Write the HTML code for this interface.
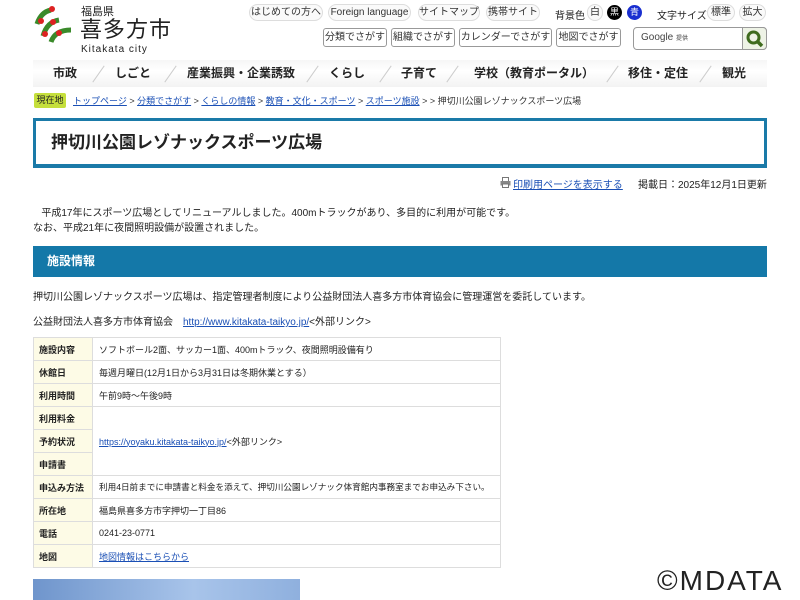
<!DOCTYPE html>
<html><head><meta charset="utf-8"><style>
*{box-sizing:border-box;margin:0;padding:0}
body{width:800px;height:600px;overflow:hidden;background:#fff;font-family:"Liberation Sans","Noto Sans CJK JP",sans-serif;color:#222;font-size:10px;position:relative}
.a{position:absolute}
.pill{position:absolute;top:4px;height:17px;border:1px solid #ddd;border-radius:9px;font-size:10px;line-height:15px;text-align:center;background:#fafafa;color:#333;white-space:nowrap}
.btn{position:absolute;top:28px;height:19px;border:1px solid #999;border-radius:3px;font-size:10px;line-height:17px;text-align:center;background:#fff;color:#333;white-space:nowrap}
.nav{position:absolute;top:60px;height:27px;font-size:12px;font-weight:bold;line-height:27px;color:#222}
.sl{position:absolute;top:64px;width:1px;height:20px;background:#ccc;transform:rotate(35deg)}
a{color:#1a4fb5;text-decoration:underline}
table{position:absolute;left:33px;top:337px;width:468px;border-collapse:collapse;font-size:9px}
td{border:1px solid #ddd;height:23px;padding:0 6px;white-space:nowrap}
td.h{background:#fdfbe6;font-weight:bold;width:59px;padding:0 5px}
</style></head><body>
<svg class="a" style="left:33px;top:4px" width="42" height="40" viewBox="0 0 42 40">
<path d="M4 20 Q8 8 18 6 M10 32 Q14 18 26 16 M18 38 Q22 26 38 26" stroke="#3a8a2a" stroke-width="5" fill="none"/>
<circle cx="19" cy="5" r="3" fill="#d22"/><circle cx="8" cy="17" r="3" fill="#d22"/><circle cx="20" cy="18" r="3" fill="#d22"/><circle cx="12" cy="30" r="3" fill="#d22"/><circle cx="26" cy="29" r="3" fill="#d22"/>
</svg>
<div class="a" style="left:81px;top:3px;font-size:11px">福島県</div>
<div class="a" style="left:80px;top:12px;font-size:22px;letter-spacing:1px">喜多方市</div>
<div class="a" style="left:81px;top:44px;font-size:10px;letter-spacing:1px">Kitakata city</div>
<div class="pill" style="left:249px;width:74px">はじめての方へ</div>
<div class="pill" style="left:328px;width:83px">Foreign language</div>
<div class="pill" style="left:418px;width:62px">サイトマップ</div>
<div class="pill" style="left:486px;width:54px">携帯サイト</div>
<div class="a" style="left:555px;top:7px;font-size:10px">背景色</div>
<div class="pill" style="left:587px;width:16px">白</div>
<div class="a" style="left:607px;top:5px;width:15px;height:15px;border-radius:50%;background:#000;color:#fff;font-size:9px;text-align:center;line-height:15px">黒</div>
<div class="a" style="left:627px;top:5px;width:15px;height:15px;border-radius:50%;background:#1a2fd0;color:#fff;font-size:9px;text-align:center;line-height:15px">青</div>
<div class="a" style="left:657px;top:7px;font-size:10px">文字サイズ</div>
<div class="pill" style="left:707px;width:28px">標準</div>
<div class="pill" style="left:739px;width:27px">拡大</div>
<div class="btn" style="left:323px;width:64px">分類でさがす</div>
<div class="btn" style="left:391px;width:64px">組織でさがす</div>
<div class="btn" style="left:459px;width:93px">カレンダーでさがす</div>
<div class="btn" style="left:556px;width:65px">地図でさがす</div>
<div class="a" style="left:633px;top:27px;width:134px;height:23px;border:1px solid #999;border-radius:4px;background:#fff"></div>
<div class="a" style="left:641px;top:32px;font-size:10px;color:#444">Google <span style="font-size:6px">提供</span></div>
<div class="a" style="left:742px;top:27px;width:25px;height:23px;border:1px solid #999;border-radius:0 4px 4px 0;background:#eef3e6"></div>
<svg class="a" style="left:745px;top:29px" width="20" height="20" viewBox="0 0 20 20"><circle cx="8.5" cy="8.5" r="5.5" stroke="#3f6b1e" stroke-width="3" fill="none"/><path d="M12.5 12.5L17 17" stroke="#3f6b1e" stroke-width="3.5"/></svg>
<div class="a" style="left:33px;top:60px;width:734px;height:27px;background:linear-gradient(#f6f6f6,#fff 40%,#f3f3f3)"></div>
<div class="nav" style="left:53px">市政</div>
<div class="nav" style="left:115px">しごと</div>
<div class="nav" style="left:187px">産業振興・企業誘致</div>
<div class="nav" style="left:329px">くらし</div>
<div class="nav" style="left:401px">子育て</div>
<div class="nav" style="left:474px">学校（教育ポータル）</div>
<div class="nav" style="left:628px">移住・定住</div>
<div class="nav" style="left:722px">観光</div>
<div class="sl" style="left:98px"></div><div class="sl" style="left:170px"></div><div class="sl" style="left:312px"></div><div class="sl" style="left:385px"></div><div class="sl" style="left:452px"></div><div class="sl" style="left:612px"></div><div class="sl" style="left:705px"></div>
<div class="a" style="left:34px;top:93px;width:32px;height:15px;background:#c5df3c;border-radius:2px;font-size:9px;line-height:15px;text-align:center">現在地</div>
<div class="a" style="left:73px;top:94px;font-size:9px;color:#333"><a>トップページ</a> &gt; <a>分類でさがす</a> &gt; <a>くらしの情報</a> &gt; <a>教育・文化・スポーツ</a> &gt; <a>スポーツ施設</a> &gt; &gt; 押切川公園レゾナックスポーツ広場</div>
<div class="a" style="left:33px;top:118px;width:734px;height:50px;border:3px solid #1a7aa8;border-bottom-width:4px;padding-left:15px;font-size:17px;font-weight:bold;line-height:44px">押切川公園レゾナックスポーツ広場</div>
<svg class="a" style="left:500px;top:177px" width="11" height="11" viewBox="0 0 11 11"><rect x="2.5" y="0.5" width="6" height="4" fill="#fff" stroke="#777"/><rect x="0.5" y="4" width="10" height="4.5" fill="#888"/><rect x="2.5" y="7" width="6" height="3.5" fill="#fff" stroke="#777"/></svg>
<div class="a" style="left:513px;top:176px;font-size:10px"><a>印刷用ページを表示する</a></div>
<div class="a" style="left:638px;top:176px;font-size:10px">掲載日：2025年12月1日更新</div>
<div class="a" style="left:33px;top:206px;font-size:10px;line-height:15px">&nbsp;&nbsp;&nbsp;平成17年にスポーツ広場としてリニューアルしました。400mトラックがあり、多目的に利用が可能です。<br>なお、平成21年に夜間照明設備が設置されました。</div>
<div class="a" style="left:33px;top:246px;width:734px;height:31px;background:#1478a8;color:#fff;font-size:12px;font-weight:bold;line-height:31px;padding-left:14px">施設情報</div>
<div class="a" style="left:33px;top:288px;font-size:10px">押切川公園レゾナックスポーツ広場は、指定管理者制度により公益財団法人喜多方市体育協会に管理運営を委託しています。</div>
<div class="a" style="left:33px;top:313px;font-size:10px">公益財団法人喜多方市体育協会　<a>http://www.kitakata-taikyo.jp/</a>&lt;外部リンク&gt;</div>
<table>
<tr><td class="h">施設内容</td><td>ソフトボール2面、サッカー1面、400mトラック、夜間照明設備有り</td></tr>
<tr><td class="h">休館日</td><td>毎週月曜日(12月1日から3月31日は冬期休業とする）</td></tr>
<tr><td class="h">利用時間</td><td>午前9時～午後9時</td></tr>
<tr><td class="h">利用料金</td><td rowspan="3"><a>https://yoyaku.kitakata-taikyo.jp/</a>&lt;外部リンク&gt;</td></tr>
<tr><td class="h">予約状況</td></tr>
<tr><td class="h">申請書</td></tr>
<tr><td class="h">申込み方法</td><td style="font-size:8.6px">利用4日前までに申請書と料金を添えて、押切川公園レゾナック体育館内事務室までお申込み下さい。</td></tr>
<tr><td class="h">所在地</td><td>福島県喜多方市字押切一丁目86</td></tr>
<tr><td class="h">電話</td><td>0241-23-0771</td></tr>
<tr><td class="h">地図</td><td><a>地図情報はこちらから</a></td></tr>
</table>
<div class="a" style="left:33px;top:579px;width:267px;height:21px;background:linear-gradient(90deg,#6f95cc,#a8c4ea 60%,#8fb0de)"></div>
<div class="a" style="left:657px;top:565px;font-size:28px;letter-spacing:2px;color:#222">©MDATA</div>
</body></html>
